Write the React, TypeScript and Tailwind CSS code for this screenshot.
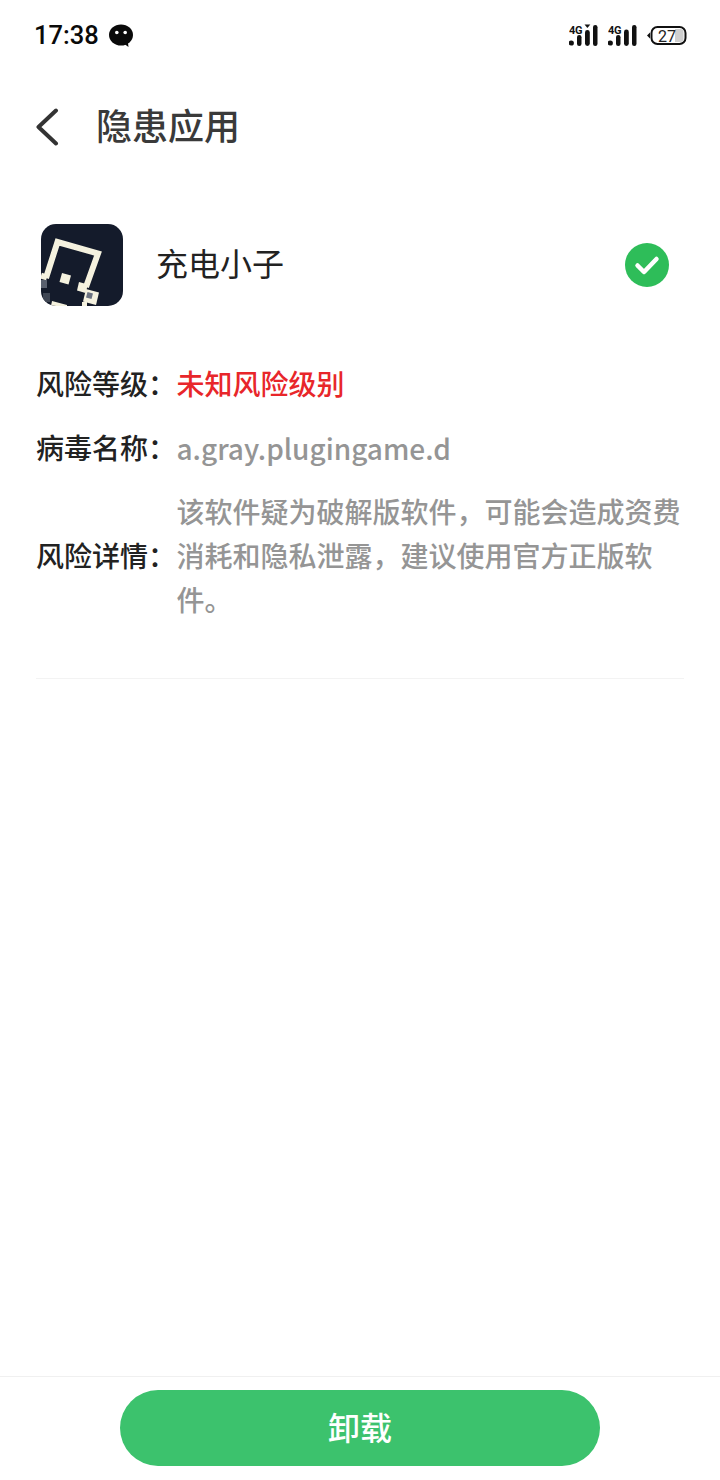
import React from "react";

const cjk = "font-['Roboto','Noto_Sans_CJK_SC',sans-serif]";

function Signal({ arrow }: { arrow?: boolean }) {
  return (
    <svg width="30" height="24" viewBox="0 0 30 24" className="block">
      <text x="0" y="9.5" fontSize="11" fontWeight="700" fontFamily="Roboto, sans-serif" fill="#111" letterSpacing="-0.3">4G</text>
      <circle cx="2.3" cy="19" r="2.6" fill="#111" />
      <rect x="8" y="11" width="4.5" height="11" rx="2.2" fill="#111" />
      <rect x="16" y={arrow ? 6 : 5.5} width="4.8" height={arrow ? 16 : 16.5} rx="2.4" fill="#111" />
      <rect x="24" y="1" width="4.5" height="21" rx="2.2" fill="#111" />
      {arrow && <path d="M15.5 0.5h5.8l-2.9 3.6z" fill="#111" />}
    </svg>
  );
}

function Battery() {
  return (
    <svg width="40" height="20" viewBox="0 0 40 20" className="block">
      <path d="M0 9.5 L3 6.5 V12.5 Z" fill="#111" />
      <rect x="4.5" y="1" width="34" height="17" rx="6" fill="#fff" stroke="#111" strokeWidth="2" />
      <path d="M28 3h5.5a3 3 0 0 1 3 3v7a3 3 0 0 1-3 3H28z" fill="#cfcfcf" />
      <text x="20" y="15.5" textAnchor="middle" fontSize="16" fontFamily="Roboto, sans-serif" fill="#222">27</text>
    </svg>
  );
}

function WeChat() {
  return (
    <svg width="26" height="26" viewBox="0 0 26 26" className="block">
      <ellipse cx="13" cy="12" rx="12" ry="10.5" fill="#0a0a0a" />
      <path d="M15 20l5.5 4-.8-6z" fill="#0a0a0a" />
      <circle cx="8.8" cy="9.5" r="1.8" fill="#fff" />
      <circle cx="17.2" cy="9.5" r="1.8" fill="#fff" />
    </svg>
  );
}

function AppIcon() {
  return (
    <svg width="82" height="82" viewBox="0 0 82 82" className="block">
      <defs>
        <clipPath id="ic"><rect width="82" height="82" rx="15" /></clipPath>
      </defs>
      <g clipPath="url(#ic)">
        <rect width="82" height="82" fill="#141b2b" />
        <path d="M5 54 L16.5 18 L57 29.5 L45 63" fill="none" stroke="#f5f2df" strokeWidth="6" />
        <path d="M6 53.5 L0 51.5" stroke="#f5f2df" strokeWidth="6" />
        <path d="M0 56 H6 V64 H0Z" fill="#59606e" />
        <path d="M2 69 H9 V78 H2Z" fill="#3f4654" />
        <path d="M21 49 L30 51.5 L27.5 60.5 L18.5 58Z" fill="#f5f2df" />
        <path d="M38 58 L47 60.5 L44.5 69 L36 66.5Z" fill="#f5f2df" />
        <path d="M45 65 L58 68.5 L55 81 L42 77.5Z" fill="#f5f2df" />
        <path d="M46.5 68 L52 69.5 L50.5 75 L45 73.5Z" fill="#6b7280" />
        <path d="M11 77 L26 81 L26 82 L10 82Z" fill="#f5f2df" />
        <path d="M41 78 H46 V82 H41Z" fill="#f5f2df" />
      </g>
    </svg>
  );
}

function Row({ label, children }: { label: string; children: React.ReactNode }) {
  return (
    <div className="flex items-center">
      <div className="w-[140.5px] shrink-0 text-[28px] font-medium leading-[44px] text-[#222]">{label}</div>
      <div className="min-w-0 flex-1">{children}</div>
    </div>
  );
}

export default function App() {
  return (
    <div className={`flex h-[1480px] w-[720px] flex-col bg-white ${cjk}`}>
      <div className="flex h-[72px] items-center justify-between pl-[34px] pr-[33px]">
        <div className="flex items-center gap-[9px]">
          <span className="text-[25.5px] font-medium leading-none text-[#0a0a0a]">17:38</span>
          <WeChat />
        </div>
        <div className="flex items-center gap-[9px]">
          <Signal arrow />
          <Signal />
          <Battery />
        </div>
      </div>

      <div className="mt-[2px] flex h-[106px] items-center pl-[35px]">
        <svg width="24" height="38" viewBox="0 0 24 38" className="block">
          <path d="M21 2.5 L3.5 19 L21 35.5" fill="none" stroke="#333" strokeWidth="4" strokeLinecap="round" strokeLinejoin="round" />
        </svg>
        <h1 className="ml-[37px] mt-[2px] text-[36px] font-medium leading-none text-[#3a3a3a]">隐患应用</h1>
      </div>

      <div className="mt-[44px] flex items-center pl-[41px] pr-[51px]">
        <AppIcon />
        <span className="ml-[33px] flex-1 text-[32px] leading-none text-[#222]">充电小子</span>
        <svg width="44" height="44" viewBox="0 0 44 44" className="block">
          <circle cx="22" cy="22" r="22" fill="#2ebd59" />
          <path d="M12.5 22.5 L19 29 L31.5 16" fill="none" stroke="#fff" strokeWidth="4.5" strokeLinecap="round" strokeLinejoin="round" />
        </svg>
      </div>

      <div className="mx-[36px] mt-[58px] flex flex-col gap-[20px] border-b border-[#f3f3f3] pb-[54px]">
        <Row label="风险等级：">
          <span className="text-[28px] font-medium leading-[44px] text-[#e8262a]">未知风险级别</span>
        </Row>
        <Row label="病毒名称：">
          <span className="block pb-[4px] font-['Noto_Sans_CJK_SC',sans-serif] text-[28px] font-medium leading-[40px] text-[#959595]">a.gray.plugingame.d</span>
        </Row>
        <Row label="风险详情：">
          <p className="text-[28px] font-medium leading-[44px] text-[#959595]">该软件疑为破解版软件，可能会造成资费消耗和隐私泄露，建议使用官方正版软件。</p>
        </Row>
      </div>

      <div className="flex-1" />

      <div className="mb-[1px] flex h-[103px] justify-center border-t border-[#f0f0f0] pt-[13px]">
        <button className="h-[76px] w-[480px] rounded-full bg-[#3cc26d] pt-[2px] text-[32px] font-medium text-white">卸载</button>
      </div>
    </div>
  );
}
